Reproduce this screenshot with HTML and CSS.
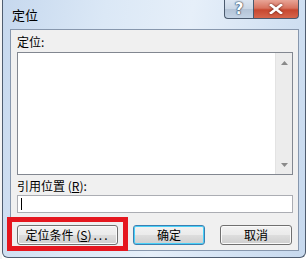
FILE: index.html
```html
<!DOCTYPE html>
<html>
<head>
<meta charset="utf-8">
<link rel="stylesheet" href="styles.css">
</head>
<body>
<div class="desk">
  <div class="window">
    <div class="titlebar">
      <span class="title">定位</span>
      <div class="caption">
        <div class="cbtn help">?</div>
        <div class="cbtn close">
          <svg width="14" height="10" viewBox="0 0 14 10"><path d="M2 1 L12 9 M12 1 L2 9" stroke="#fff" stroke-width="2.6" stroke-linecap="square"/></svg>
        </div>
      </div>
    </div>
    <div class="client">
      <div class="label first">定位:</div>
      <div class="listbox">
        <div class="list-area"></div>
        <div class="scrollbar">
          <svg class="arrow" width="7" height="4" viewBox="0 0 7 4"><path d="M0 4 L3.5 0 L7 4 Z" fill="#8a8a8a"/></svg>
          <svg class="arrow" width="7" height="4" viewBox="0 0 7 4"><path d="M0 0 L3.5 4 L7 0 Z" fill="#8a8a8a"/></svg>
        </div>
      </div>
      <div class="label second">引用位置 (<u>R</u>):</div>
      <div class="input"><span class="caret"></span></div>
      <div class="buttons">
        <div class="btn wide">定位条件 (<u>S</u>)<span class="dots">...</span></div>
        <div class="btn default">确定</div>
        <div class="btn">取消</div>
      </div>
    </div>
  </div>
  <div class="highlight"></div>
</div>
</body>
</html>
```
FILE: styles.css
```css
* { box-sizing: border-box; }
html, body { margin: 0; padding: 0; }
body {
  width: 308px;
  height: 259px;
  overflow: hidden;
  background: #ffffff;
  font-family: "Noto Sans CJK SC", "Noto Sans", sans-serif;
  font-size: 12px;
  color: #000;
}
.desk {
  position: relative;
  width: 308px;
  height: 259px;
  padding-left: 2px;
  background: linear-gradient(to right, #f4f4f4 0, #f4f4f4 2px, transparent 2px);
}
.window {
  width: 304px;
  height: 258px;
  border: 1px solid #4f5d70;
  border-top: none;
  border-radius: 0 0 6px 6px;
  background: linear-gradient(100deg, #c6d8ee 0%, #dbe8f6 30%, #e6eff9 55%, #d3e2f3 80%, #c7d9ee 100%);
  padding: 0 6px 6px 7px;
  display: flex;
  flex-direction: column;
}
.titlebar {
  height: 29px;
  display: flex;
  align-items: flex-start;
  flex-shrink: 0;
}
.title {
  font-size: 13px;
  line-height: 14px;
  padding-top: 8px;
  padding-left: 2px;
  color: #000;
}
.caption {
  margin-left: auto;
  margin-right: 0;
  display: flex;
  height: 19px;
}
.cbtn {
  height: 19px;
  border: 1px solid #4a5a6e;
  border-top: none;
  display: flex;
  align-items: center;
  justify-content: center;
}
.help {
  width: 29px;
  border-radius: 0 0 0 4px;
  border-right: none;
  background: linear-gradient(to bottom, #dbe5f1 0%, #c9d6e5 50%, #b3c3d6 51%, #c3d3e5 100%);
  color: #fff;
  font-family: "DejaVu Sans", sans-serif;
  font-weight: bold;
  font-size: 15px;
  text-shadow: 0 0 1px #30455e, 0 0 1px #30455e, 0 0 2px #30455e;
}
.close {
  width: 46px;
  border-radius: 0 0 4px 0;
  background: linear-gradient(to bottom, #e8a597 0%, #d8735f 45%, #c7472f 55%, #d6654b 100%);
}
.close svg { filter: drop-shadow(0 0 1px #5a1a10); }
.client {
  flex: 1;
  background: #f0f0f0;
  border: 1px solid #8797ad;
  padding: 0 5px 0 6px;
  display: flex;
  flex-direction: column;
}
.label {
  height: 14px;
  line-height: 14px;
  padding-left: 0;
}
.label.first { margin-top: 5px; }
.label.second { margin-top: 4px; }
.label u { text-decoration: underline; }
.listbox {
  margin-top: 3px;
  height: 123px;
  border: 1px solid #828790;
  background: #fff;
  display: flex;
}
.list-area { flex: 1; }
.scrollbar {
  width: 17px;
  background: #ececec;
  border-left: 1px solid #e3e3e3;
  display: flex;
  flex-direction: column;
  justify-content: space-between;
  align-items: center;
  padding: 8px 0 7px;
}
.input {
  margin-top: 2px;
  height: 18px;
  border: 1px solid #abadb3;
  background: #fff;
  padding: 2px 3px;
}
.caret {
  display: block;
  width: 1px;
  height: 12px;
  background: #000;
}
.buttons {
  margin-top: 12px;
  display: flex;
  gap: 15px;
}
.btn {
  width: 72px;
  height: 20px;
  border: 1px solid #707070;
  border-radius: 3px;
  background: linear-gradient(to bottom, #f2f2f2 0%, #ebebeb 48%, #dddddd 52%, #cfcfcf 100%);
  display: flex;
  align-items: center;
  justify-content: center;
  line-height: 14px;
  box-shadow: inset 0 0 0 1px #fafafa;
  white-space: pre;
}
.btn.wide { width: 101px; }
.dots { letter-spacing: 2px; margin-left: 2px; }
.btn.default {
  border-color: #3c7fb1;
  box-shadow: inset 0 0 0 1px #48d0f8;
}
.highlight {
  position: absolute;
  left: 7px;
  top: 217px;
  width: 121px;
  height: 34px;
  border: 5px solid #e5171f;
}
```
